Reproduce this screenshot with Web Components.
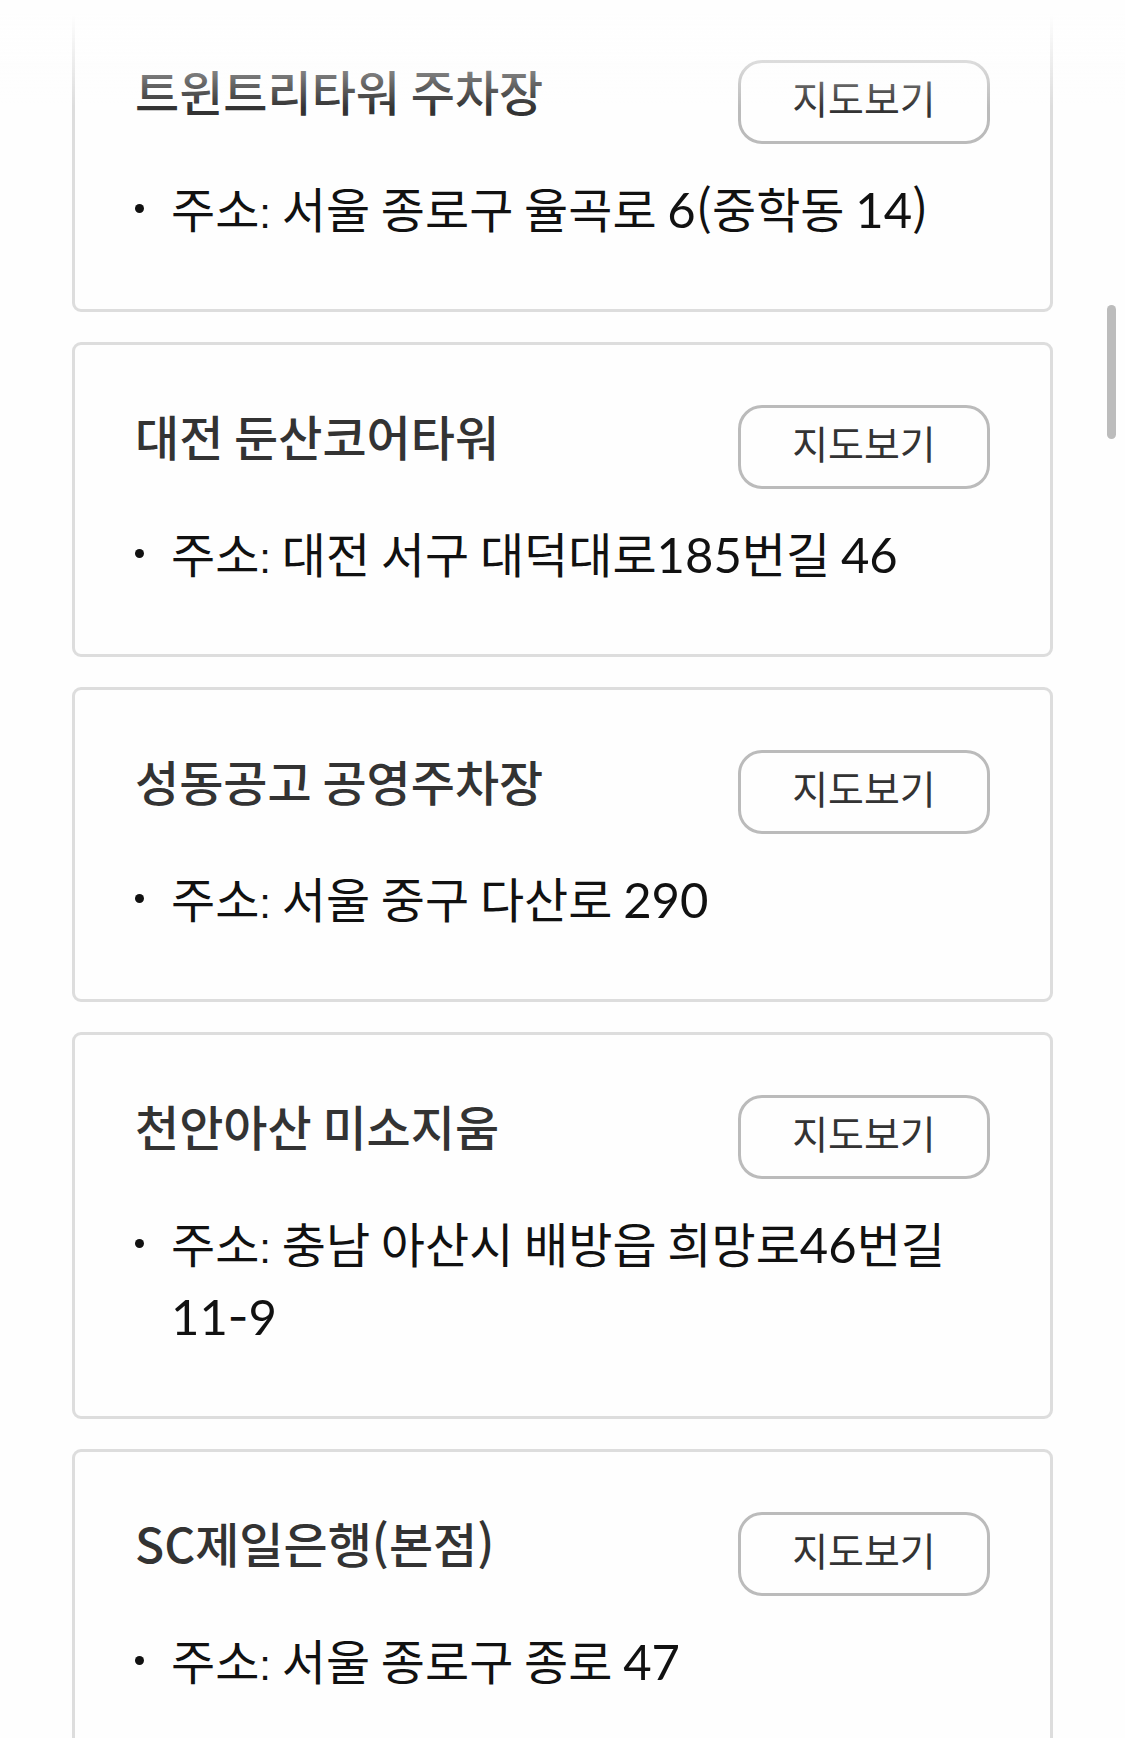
<!DOCTYPE html>
<html lang="ko">
<head>
<meta charset="utf-8">
<meta name="viewport" content="width=device-width, initial-scale=1">
<title>주차장 안내</title>
<style>
  html, body { margin: 0; height: 100%; overflow: hidden; background: #fefefe; }
  body { font-family: "Noto Sans CJK KR", sans-serif; font-size: 48px; line-height: 72px; color: #111; }
</style>
</head>
<body>
<parking-page>
  <parking-card name="트윈트리타워 주차장" address="서울 종로구 율곡로 6(중학동 14)"></parking-card>
  <parking-card name="대전 둔산코어타워" address="대전 서구 대덕대로185번길 46"></parking-card>
  <parking-card name="성동공고 공영주차장" address="서울 중구 다산로 290"></parking-card>
  <parking-card name="천안아산 미소지움" address="충남 아산시 배방읍 희망로46번길 11-9"></parking-card>
  <parking-card name="SC제일은행(본점)" address="서울 종로구 종로 47"></parking-card>
</parking-page>

<template id="page-template">
  <style>
    :host { display: block; height: 100%; overflow: hidden; }
    main { display: flex; flex-direction: column; gap: 30px; padding: 0 72px; margin-top: -3px; }
    .fade {
      position: fixed; inset: 0 0 auto 0; height: 108px; pointer-events: none;
      background: linear-gradient(#fefefe 14px, rgba(254, 254, 254, 0));
    }
    .thumb {
      position: fixed; top: 305px; right: 9px; width: 9px; height: 134px;
      border-radius: 5px; background: #bcbcbc;
    }
  </style>
  <main><slot></slot></main>
  <div class="fade"></div>
  <div class="thumb"></div>
</template>

<template id="card-template">
  <style>
    :host { display: block; flex: none; }
    article { border: 3px solid #ddd; border-radius: 9px; padding: 60px 60px 66px; }
    header { display: flex; justify-content: space-between; align-items: flex-start; gap: 24px; padding-bottom: 27px; }
    h2 { margin: 0; font-size: 48px; line-height: 60px; font-weight: 500; color: #333; }
    ul { margin: 0; padding: 0; list-style: none; }
    li { display: flex; gap: 27px; word-break: keep-all; }
    li::before {
      content: ""; flex: none; width: 9px; height: 9px; margin-top: 33px;
      border-radius: 50%; background: #111;
    }
    .num, .space, .dash, .colon { line-height: 1; }
    .num { font-family: Lato, sans-serif; font-size: 49px; }
    .space { font-family: Lato, sans-serif; font-size: 42px; font-weight: 400; }
    .dash { font-family: Inter, sans-serif; font-size: 45px; font-feature-settings: "case"; }
    .colon { font-family: "Liberation Sans", sans-serif; font-size: 42px; }
  </style>
  <article>
    <header>
      <h2></h2>
      <map-button></map-button>
    </header>
    <ul><li><span class="text"></span></li></ul>
  </article>
</template>

<template id="button-template">
  <style>
    :host { display: block; flex: none; }
    button {
      display: block; box-sizing: border-box; width: 252px; height: 84px; margin: 0;
      padding: 0 0 10px; border: 3px solid #bbb; border-radius: 24px; background: none;
      font-family: inherit; font-size: 39px; line-height: 60px; font-weight: 400; color: #333;
    }
  </style>
  <button type="button">지도보기</button>
</template>

<script>
  function attach(host, id) {
    const root = host.attachShadow({ mode: "open" });
    root.append(document.getElementById(id).content.cloneNode(true));
    return root;
  }

  // Hangul stays in the body face; numbers, spaces and marks get their own faces.
  const FACES = [[/^\d+$/, "num"], [/^ $/, "space"], [/^-$/, "dash"], [/^:$/, "colon"]];

  function setMixedText(target, text) {
    for (const part of text.split(/(\d+|[ :-])/)) {
      if (!part) continue;
      const face = FACES.find(([pattern]) => pattern.test(part));
      if (!face) {
        target.append(part);
        continue;
      }
      const span = document.createElement("span");
      span.className = face[1];
      span.textContent = part;
      target.append(span);
    }
  }

  class MapButton extends HTMLElement {
    constructor() { super(); attach(this, "button-template"); }
  }

  class ParkingCard extends HTMLElement {
    connectedCallback() {
      if (this.shadowRoot) return;
      const root = attach(this, "card-template");
      setMixedText(root.querySelector("h2"), this.getAttribute("name"));
      setMixedText(root.querySelector(".text"), "주소: " + this.getAttribute("address"));
    }
  }

  class ParkingPage extends HTMLElement {
    constructor() { super(); attach(this, "page-template"); }
  }

  customElements.define("map-button", MapButton);
  customElements.define("parking-card", ParkingCard);
  customElements.define("parking-page", ParkingPage);
</script>
</body>
</html>
